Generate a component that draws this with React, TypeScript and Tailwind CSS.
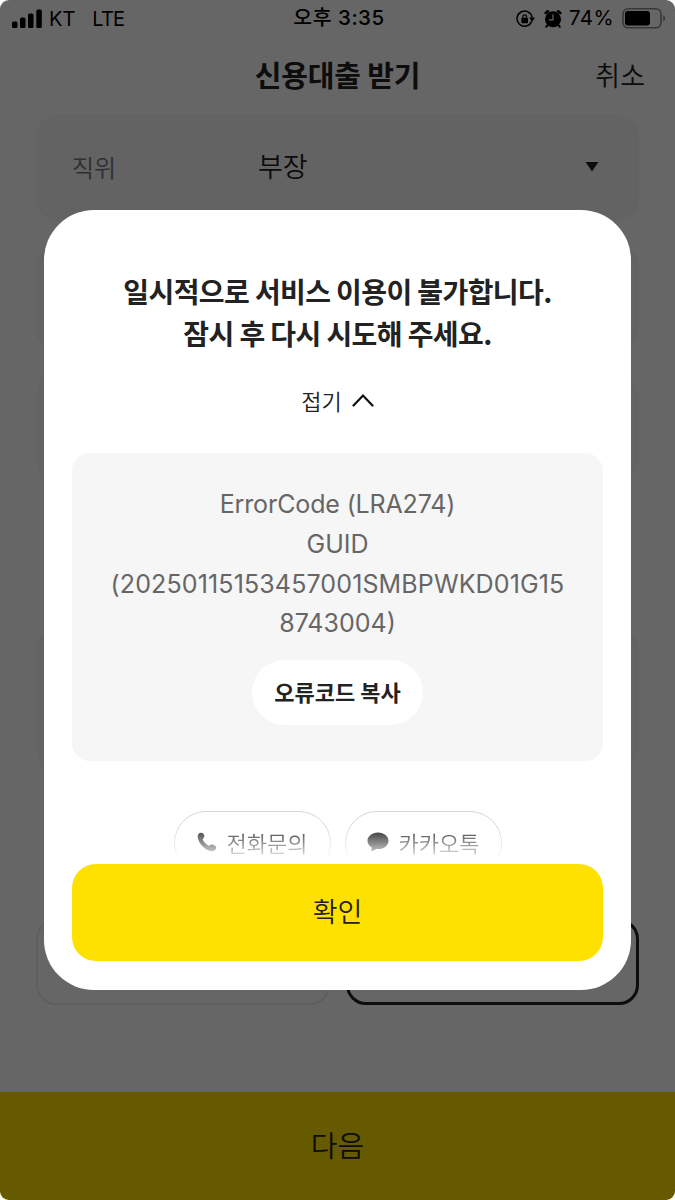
import type { ReactNode } from "react";

const SignalIcon = () => (
  <svg width="31" height="20" viewBox="0 0 31 20" fill="black">
    <rect x="0" y="12.5" width="5.5" height="6.5" rx="1.5" />
    <rect x="8" y="8.5" width="5.5" height="10.5" rx="1.5" />
    <rect x="16" y="4.5" width="5.5" height="14.5" rx="1.5" />
    <rect x="24.3" y="0.5" width="5.5" height="18.5" rx="1.5" />
  </svg>
);

const RotationLockIcon = () => (
  <svg width="19" height="18" viewBox="0 0 19 18" fill="none">
    <path
      d="M15.6 11.6A7.6 7.6 0 1 1 16.1 7.5"
      stroke="black"
      strokeWidth="1.5"
    />
    <path d="M13.2 7.6h5.8l-2.9 4.3z" fill="black" />
    <rect x="5.4" y="7.8" width="6.6" height="5.4" rx="0.8" fill="black" />
    <path
      d="M6.9 8.4V6.6a1.8 1.8 0 0 1 3.6 0v1.8"
      stroke="black"
      strokeWidth="1.2"
    />
  </svg>
);

const AlarmIcon = () => (
  <svg width="18" height="18" viewBox="0 0 18 18" fill="none">
    <circle cx="9" cy="9.3" r="8" fill="black" />
    <path
      d="M1.8 3L3.8 1.4M16.2 3L14.2 1.4"
      stroke="black"
      strokeWidth="2.8"
      strokeLinecap="round"
    />
    <path
      d="M4 14.5L2.2 16.8M14 14.5L15.8 16.8"
      stroke="black"
      strokeWidth="2"
      strokeLinecap="round"
    />
    <path d="M9 4.3V9.8H4.8" stroke="#fff" strokeWidth="1.2" />
  </svg>
);

const BatteryIcon = () => (
  <svg width="44" height="21" viewBox="0 0 44 21" fill="none">
    <rect
      x="1"
      y="0.8"
      width="38"
      height="19"
      rx="5"
      stroke="black"
      strokeOpacity="0.45"
      strokeWidth="1.6"
    />
    <rect x="3" y="3" width="25" height="14.5" rx="3" fill="black" />
    <path
      d="M41.3 7.2a3.6 3.6 0 0 1 0 6.2z"
      fill="black"
      fillOpacity="0.5"
    />
  </svg>
);

const PhoneIcon = () => (
  <svg width="20" height="20" viewBox="0 0 20 20" fill="#222">
    <path d="M.7 4.6C.7 2.3 2.2.7 4.1.7c1.6 0 2.9 1.3 3.2 2.9.2 1.3-.3 2.3-1.2 3-.5.4-.5.9-.2 1.4 1.3 2.3 3.2 4.2 5.5 5.5.5.3 1 .2 1.4-.2.8-.7 1.800-.9 3.200-.5 1.9.5 3.4 1.6 3.3 3-.1 2-2.3 3.500-4.700 3.400C8.800 19 .7 11.300.7 4.600z" />
  </svg>
);

const TalkIcon = () => (
  <svg width="22" height="20" viewBox="0 0 22 20" fill="#111">
    <path d="M11 .5C5 .5.5 4.200.5 8.800c0 2.900 1.700 5.300 4.300 6.700L4.300 19.500l5.200-2.500c.5.1 1 .1 1.500.1 6 0 10.500-3.700 10.500-8.300S17 .5 11 .5z" />
  </svg>
);

const StatusBar = () => (
  <div className="flex h-[37px] items-center justify-between pr-[9px] pl-[12px] font-['Inter','Noto_Sans_CJK_KR',sans-serif] text-black">
    <div className="flex w-[240px] items-center text-[20px]">
      <SignalIcon />
      <span className="ml-[6px]">KT</span>
      <span className="ml-[17px] tracking-[-0.8px]">LTE</span>
    </div>
    <div className="text-[20.5px] font-medium tracking-[0.5px] whitespace-nowrap">
      오후 3:35
    </div>
    <div className="flex w-[240px] items-center justify-end text-[20.5px]">
      <RotationLockIcon />
      <span className="ml-[9px]">
        <AlarmIcon />
      </span>
      <span className="ml-[7px] tracking-[0.4px]">74%</span>
      <span className="ml-[8px]">
        <BatteryIcon />
      </span>
    </div>
  </div>
);

const Field = ({
  className,
  children,
}: {
  className: string;
  children?: ReactNode;
}) => (
  <div
    className={`flex items-center rounded-[22px] border border-[#f5f5f5] bg-[#f8f8f8] ${className}`}
  >
    {children}
  </div>
);

const LoanForm = () => (
  <div className="flex h-full flex-col bg-white">
    <StatusBar />
    <header className="grid h-[78px] grid-cols-[1fr_auto_1fr] items-center px-[30px] pb-[2px]">
      <span />
      <h1 className="text-[29px] font-bold tracking-[-0.2px] text-[#222]">
        신용대출 받기
      </h1>
      <button className="text-right text-[27px] font-[350] text-[#222]">
        취소
      </button>
    </header>

    <main className="flex flex-1 flex-col px-[36px]">
      <Field className="h-[106px] pr-[39px] pb-[3px] pl-[35px]">
        <span className="w-[186px] text-[24px] font-[350] text-[#777]">
          직위
        </span>
        <span className="flex-1 text-[27px] font-[350] text-[#222]">부장</span>
        <svg width="14" height="10" viewBox="0 0 14 10" fill="#222">
          <path d="M.5 0h13L7 9.500z" />
        </svg>
      </Field>
      <Field className="mt-[24px] h-[106px]" />
      <Field className="mt-[24px] h-[106px]" />
      <Field className="mt-[148px] h-[140px]" />
      <div className="mt-[150px] grid grid-cols-2 gap-[16px]">
        <div className="h-[86px] rounded-[20px] border-2 border-[#ebebeb]" />
        <div className="h-[86px] rounded-[20px] border-[3px] border-[#222]" />
      </div>
    </main>

    <button className="h-[108px] bg-[#ffe100] pb-[3px] text-[29px] font-[350] text-[#222]">
      다음
    </button>
  </div>
);

const ContactButton = ({
  icon,
  label,
}: {
  icon: ReactNode;
  label: string;
}) => (
  <button className="flex h-[64px] w-[157px] items-center justify-center gap-[10px] rounded-[32px] border-[1.5px] border-[#d5d5d5] pb-[2px] text-[22px] font-[350] text-[#222]">
    {icon}
    <span>{label}</span>
  </button>
);

const ErrorDialog = () => (
  <div className="flex h-[780px] w-[587px] flex-col rounded-[50px] bg-white px-[28px] pt-[60px] pb-[29px] text-center">
    <h2 className="text-[28px] leading-[42px] font-bold tracking-[-0.6px] whitespace-nowrap text-[#222]">
      일시적으로 서비스 이용이 불가합니다.
      <br />
      잠시 후 다시 시도해 주세요.
    </h2>

    <button className="mt-[28px] flex h-[36px] items-center justify-center gap-[10px] text-[22px] font-[350] text-[#222]">
      접기
      <svg width="22" height="14" viewBox="0 0 22 14" fill="none">
        <path
          d="M1.5 12.500L11 2.500L20.500 12.500"
          stroke="#111"
          strokeWidth="2.2"
          strokeLinecap="round"
        />
      </svg>
    </button>

    <div className="mt-[35px] flex h-[308px] shrink-0 flex-col items-center rounded-[18px] bg-[#f6f6f6] pt-[32px]">
      <p className="font-['Inter',sans-serif] text-[25px] leading-[39.8px] whitespace-nowrap text-[#666]">
        <span className="tracking-[-0.15px]">ErrorCode (LRA274)</span>
        <br />
        GUID
        <br />
        <span className="tracking-[0.13px]">
          (20250115153457001SMBPWKD01G15
        </span>
        <br />
        8743004)
      </p>
      <button className="mt-[16px] h-[65px] w-[171px] rounded-full bg-white pb-[2px] text-[22px] font-bold text-[#222]">
        오류코드 복사
      </button>
    </div>

    {/* scroll area, cut off above the confirm button */}
    <div className="mt-[50px] flex h-[53px] shrink-0 items-start justify-center gap-[14px] overflow-hidden [mask-image:linear-gradient(to_bottom,black_25%,transparent_95%)]">
      <ContactButton icon={<PhoneIcon />} label="전화문의" />
      <ContactButton icon={<TalkIcon />} label="카카오톡" />
    </div>

    <button className="h-[97px] shrink-0 rounded-[24px] bg-[#ffe100] pb-[3px] text-[27px] font-[350] text-[#222]">
      확인
    </button>
  </div>
);

const App = () => {
  return (
    <div className="relative h-[1200px] w-[675px] overflow-hidden rounded-[9px] font-['Noto_Sans_CJK_KR',sans-serif]">
      <LoanForm />
      <div className="absolute inset-0 flex items-center justify-center bg-black/60">
        <ErrorDialog />
      </div>
    </div>
  );
};

export default App;
